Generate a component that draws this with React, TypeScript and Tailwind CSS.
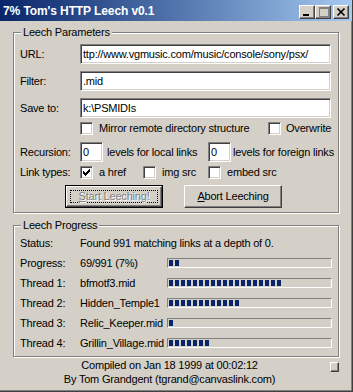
import React from "react";

const raised =
  "border border-t-white border-l-white border-r-[#404040] border-b-[#404040] shadow-[inset_-1px_-1px_0_#808080]";
const sunken =
  "border border-t-[#808080] border-l-[#808080] border-r-white border-b-white shadow-[inset_1px_1px_0_#404040,inset_-1px_-1px_0_#d4d0c8]";

const CheckBox: React.FC<{ checked?: boolean }> = ({ checked }) => (
  <div className={`w-[13px] h-[13px] shrink-0 bg-white ${sunken} flex items-center justify-center`}>
    {checked && (
      <svg width="7" height="7" viewBox="0 0 7 7" shapeRendering="crispEdges">
        <rect x="0" y="2" width="1" height="3" fill="#000" />
        <rect x="1" y="3" width="1" height="3" fill="#000" />
        <rect x="2" y="4" width="1" height="3" fill="#000" />
        <rect x="3" y="3" width="1" height="3" fill="#000" />
        <rect x="4" y="2" width="1" height="3" fill="#000" />
        <rect x="5" y="1" width="1" height="3" fill="#000" />
        <rect x="6" y="0" width="1" height="3" fill="#000" />
      </svg>
    )}
  </div>
);

const Field: React.FC<{ value: string; className?: string }> = ({ value, className }) => (
  <div
    className={`h-[20px] bg-white ${sunken} flex items-center pl-[2px] overflow-hidden whitespace-nowrap ${className ?? ""}`}
  >
    {value}
  </div>
);

const Group: React.FC<{ title: string; className?: string; children: React.ReactNode }> = ({
  title,
  className,
  children,
}) => (
  <div className={`relative border border-[#808080] shadow-[inset_1px_1px_0_#fff,1px_1px_0_#fff] ${className ?? ""}`}>
    <span className="absolute -top-[8px] left-[7px] px-[2px] bg-[#d4d0c8] leading-[14px]">{title}</span>
    {children}
  </div>
);

const Bar: React.FC<{ blocks: number }> = ({ blocks }) => (
  <div className="ml-[3px] w-[165px] h-[10px] border border-t-[#808080] border-l-[#808080] border-r-white border-b-white p-[1px] flex gap-[2px]">
    {Array.from({ length: blocks }).map((_, i) => (
      <div key={i} className="w-[4px] h-full bg-[#0a246a]" />
    ))}
  </div>
);

const threads = [
  { label: "Thread 1:", file: "bfmotf3.mid", blocks: 19 },
  { label: "Thread 2:", file: "Hidden_Temple1", blocks: 12 },
  { label: "Thread 3:", file: "Relic_Keeper.mid", blocks: 1 },
  { label: "Thread 4:", file: "Grillin_Village.mid", blocks: 7 },
];

export default function App() {
  return (
    <div className="w-[353px] h-[392px] bg-[#d4d0c8] text-black text-[11px] tracking-[-0.2px] font-['Liberation_Sans',Arial,sans-serif] border-r border-b border-[#404040] shadow-[inset_-1px_-1px_0_#808080] flex flex-col overflow-hidden">
      {/* Title bar */}
      <div className="h-[21px] shrink-0 bg-linear-to-r from-[#0a246a] to-[#a6caf0] flex items-center pl-[3px] pr-[3px]">
        <span className="text-white font-bold text-[12px] tracking-[-0.1px] flex-1">7% Tom's HTTP Leech v0.1</span>
        <div className="flex items-center mt-[3px]">
          <div className={`w-[16px] h-[14px] bg-[#d4d0c8] ${raised}`}>
            <svg width="14" height="12" viewBox="0 0 14 12" shapeRendering="crispEdges">
              <rect x="3" y="8" width="6" height="2" fill="#000" />
            </svg>
          </div>
          <div className={`w-[16px] h-[14px] bg-[#d4d0c8] ${raised}`}>
            <svg width="14" height="12" viewBox="0 0 14 12" shapeRendering="crispEdges">
              <path d="M4 2h9v9h-9z M4 3h9" fill="none" stroke="#fff" strokeWidth="1" transform="translate(-0.5,-0.5)" />
              <path d="M3 1h9v9h-9z M3 2h9" fill="none" stroke="#808080" strokeWidth="1" transform="translate(-0.5,-0.5) translate(1,1)" />
            </svg>
          </div>
          <div className={`ml-[2px] w-[16px] h-[14px] bg-[#d4d0c8] ${raised}`}>
            <svg width="14" height="12" viewBox="0 0 14 12">
              <path d="M3.5 2.5 L10.5 9.5 M10.5 2.5 L3.5 9.5" stroke="#000" strokeWidth="1.7" />
            </svg>
          </div>
        </div>
      </div>

      <div className="pl-[13px] pr-[13px] flex flex-col">
        {/* Leech Parameters */}
        <Group title="Leech Parameters" className="mt-[11px] pl-[6px] pb-[4px]">
          <div className="mt-[11px] h-[20px] flex items-center">
            <span className="w-[60px]">URL:</span>
            <Field value="ttp://www.vgmusic.com/music/console/sony/psx/" className="w-[251px]" />
          </div>
          <div className="mt-[7px] h-[20px] flex items-center">
            <span className="w-[60px]">Filter:</span>
            <Field value=".mid" className="w-[251px]" />
          </div>
          <div className="mt-[7px] h-[20px] flex items-center">
            <span className="w-[60px]">Save to:</span>
            <Field value="k:\PSMIDIs" className="w-[251px]" />
          </div>
          <div className="mt-[3px] h-[15px] flex items-center pl-[60px]">
            <div className="w-[188px] flex items-center gap-[6px]">
              <CheckBox />
              <span className="whitespace-nowrap">Mirror remote directory structure</span>
            </div>
            <div className="flex items-center gap-[5px]">
              <CheckBox />
              <span>Overwrite</span>
            </div>
          </div>
          <div className="mt-[6px] h-[20px] flex items-center">
            <span className="w-[60px]">Recursion:</span>
            <div className="w-[128px] flex items-center gap-[4px]">
              <Field value="0" className="w-[23px]" />
              <span className="whitespace-nowrap">levels for local links</span>
            </div>
            <div className="flex items-center gap-[2px]">
              <Field value="0" className="w-[23px]" />
              <span className="whitespace-nowrap">levels for foreign links</span>
            </div>
          </div>
          <div className="mt-[3px] h-[15px] flex items-center">
            <span className="w-[60px]">Link types:</span>
            <div className="w-[63px] flex items-center gap-[6px]">
              <CheckBox checked />
              <span>a href</span>
            </div>
            <div className="w-[65px] flex items-center gap-[6px]">
              <CheckBox />
              <span>img src</span>
            </div>
            <div className="flex items-center gap-[6px]">
              <CheckBox />
              <span>embed src</span>
            </div>
          </div>
          <div className="mt-[5px] h-[23px] flex items-center pl-[45px] gap-[21px]">
            <div className="w-[98px] h-[23px] border border-black">
              <div className={`w-full h-full ${raised} p-[3px]`}>
                <div className="w-full h-full border border-dotted border-black flex items-center justify-center text-[#808080] [text-shadow:1px_1px_0_#fff]">
                  <span>
                    <span className="underline">S</span>tart Leeching!
                  </span>
                </div>
              </div>
            </div>
            <div className={`w-[98px] h-[23px] ${raised} flex items-center justify-center`}>
              <span>
                <span className="underline">A</span>bort Leeching
              </span>
            </div>
          </div>
        </Group>

        {/* Leech Progress */}
        <Group title="Leech Progress" className="mt-[12px] pl-[6px] pb-[3px]">
          <div className="mt-[7px] h-[20px] flex items-center">
            <span className="w-[60px]">Status:</span>
            <span className="whitespace-nowrap">Found 991 matching links at a depth of 0.</span>
          </div>
          <div className="h-[20px] flex items-center">
            <span className="w-[60px]">Progress:</span>
            <span className="w-[84px] whitespace-nowrap">69/991 (7%)</span>
            <Bar blocks={2} />
          </div>
          {threads.map((t) => (
            <div key={t.label} className="h-[20px] flex items-center">
              <span className="w-[60px]">{t.label}</span>
              <span className="w-[84px] overflow-hidden whitespace-nowrap">{t.file}</span>
              <Bar blocks={t.blocks} />
            </div>
          ))}
        </Group>
      </div>

      {/* Footer */}
      <div className="mt-[1px] flex">
        <div className="flex-1" />
        <div className="text-center leading-[14px]">
          <div>Compiled on Jan 18 1999 at 00:02:12</div>
          <div>By Tom Grandgent (tgrand@canvaslink.com)</div>
        </div>
        <div className="flex-1 flex justify-end pr-[13px] pt-[4px]">
          <div className={`w-[9px] h-[10px] ${raised}`} />
        </div>
      </div>
    </div>
  );
}
